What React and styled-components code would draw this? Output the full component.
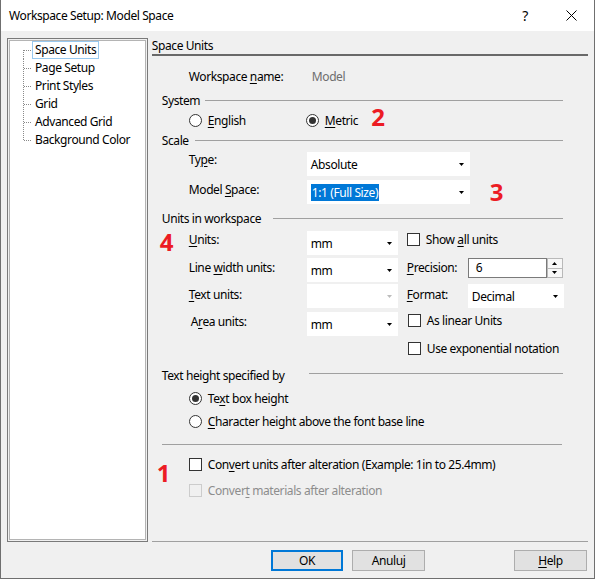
import React from 'react';
import styled, { createGlobalStyle } from 'styled-components';

const GlobalStyle = createGlobalStyle`
  html, body {
    margin: 0;
    padding: 0;
    background: #f0f0f0;
  }
  body {
    font-family: "Segoe UI", "Noto Sans", sans-serif;
    font-size: 12px;
    letter-spacing: -0.4px;
    color: #000;
  }
  u {
    text-decoration-thickness: 1px;
    text-underline-offset: 2px;
  }
`;

const Window = styled.div`
  width: 595px;
  height: 579px;
  box-sizing: border-box;
  border: 1px solid #6f6f6f;
  border-top: none;
  background: #f0f0f0;
  display: flex;
  flex-direction: column;
`;

const TitleBar = styled.div`
  height: 31px;
  background: #fff;
  display: flex;
  align-items: center;
  padding-left: 8px;
  flex-shrink: 0;
`;

const Title = styled.div`
  flex: 1;
  font-size: 12px;
`;

const TitleButton = styled.div`
  width: 46px;
  height: 31px;
  display: flex;
  align-items: center;
  justify-content: center;
  font-size: 14px;
`;

const Body = styled.div`
  display: flex;
  gap: 4px;
  padding: 7px 6px 0 6px;
`;

const Tree = styled.div`
  width: 141px;
  height: 504px;
  box-sizing: border-box;
  border: 1px solid #7a7a7a;
  background: #fff;
  box-shadow: inset 0 0 0 1px #f0f0f0, inset 0 0 0 2px #b4b4b4;
  padding: 2px 0 0 15px;
`;

const TreeItem = styled.div`
  height: 18px;
  display: flex;
  align-items: center;
`;

const TreeLabel = styled.span`
  height: 18px;
  box-sizing: border-box;
  line-height: 16px;
  padding: 0 2px;
  border: 1px solid ${p => (p.$focus ? '#99c9ef' : 'transparent')};
  white-space: nowrap;
`;

const Panel = styled.div`
  width: 437px;
  height: 503px;
  display: flex;
  flex-direction: column;
  border-bottom: 1px solid #a0a0a0;
`;

const PanelHeader = styled.div`
  height: 16px;
  line-height: 16px;
  border-bottom: 2px solid #696969;
`;

const Row = styled.div`
  display: flex;
  align-items: flex-start;
  height: ${p => p.$h || 16}px;
  margin-top: ${p => p.$mt || 0}px;
  padding-left: ${p => (p.$pl === undefined ? 37 : p.$pl)}px;
  flex-shrink: 0;
`;

const Label = styled.span`
  width: ${p => p.$w}px;
  line-height: 16px;
  margin-top: ${p => p.$dy || 0}px;
  padding-left: ${p => p.$indent || 0}px;
  box-sizing: border-box;
  white-space: nowrap;
  flex-shrink: 0;
`;

const Muted = styled.span`
  line-height: 16px;
  color: #6d6d6d;
`;

const GroupHeader = styled.div`
  display: flex;
  align-items: center;
  height: 16px;
  margin-top: ${p => p.$mt}px;
  padding: 0 25px 0 10px;
  flex-shrink: 0;
  white-space: nowrap;
`;

const GroupLine = styled.div`
  flex: 1;
  height: 1px;
  background: #a0a0a0;
  margin-left: ${p => p.$gap}px;
  margin-top: ${p => p.$dy || 0}px;
`;

const Separator = styled.div`
  height: 1px;
  background: #a0a0a0;
  margin: ${p => p.$mt}px 26px 0 10px;
  flex-shrink: 0;
`;

const Combo = styled.div`
  width: ${p => p.$w}px;
  height: 24px;
  box-sizing: border-box;
  background: #fff;
  display: flex;
  align-items: center;
  padding: 0 6px 0 4px;
  flex-shrink: 0;
  white-space: nowrap;
`;

const ComboText = styled.span`
  flex: 1;
  line-height: 15px;
`;

const Selected = styled.span`
  background: #0078d7;
  color: #fff;
  padding: 0 1px;
  line-height: 15px;
`;

const Option = styled.label`
  display: flex;
  align-items: center;
  gap: 6px;
  height: ${p => p.$h || 16}px;
  width: ${p => (p.$w ? `${p.$w}px` : 'auto')};
  margin-left: ${p => p.$ml || 0}px;
  margin-top: ${p => p.$dy || 0}px;
  color: ${p => (p.$disabled ? '#8d8d8d' : '#000')};
  white-space: nowrap;
  flex-shrink: 0;
`;

const RadioCircle = styled.span`
  width: 13px;
  height: 13px;
  box-sizing: border-box;
  border: 1px solid #333;
  border-radius: 50%;
  background: #fff;
  display: flex;
  align-items: center;
  justify-content: center;
  flex-shrink: 0;
  &::after {
    content: '';
    width: 7px;
    height: 7px;
    border-radius: 50%;
    background: #333;
    display: ${p => (p.$checked ? 'block' : 'none')};
  }
`;

const CheckBox = styled.span`
  width: 13px;
  height: 13px;
  box-sizing: border-box;
  border: 1px solid ${p => (p.$disabled ? '#cccccc' : '#333')};
  background: ${p => (p.$disabled ? 'transparent' : '#fff')};
  flex-shrink: 0;
`;

const TextInput = styled.div`
  width: 79px;
  height: 20px;
  box-sizing: border-box;
  border: 1px solid #7a7a7a;
  background: #fff;
  padding-left: 7px;
  line-height: 17px;
`;

const Spinner = styled.div`
  width: 16px;
  height: 20px;
  box-sizing: border-box;
  border: 1px solid #b9b9b9;
  display: flex;
  flex-direction: column;
  background: #f7f7f7;
`;

const SpinHalf = styled.div`
  flex: 1;
  display: flex;
  align-items: center;
  justify-content: center;
  border-top: ${p => (p.$bottom ? '1px solid #b9b9b9' : 'none')};
`;

const Marker = styled.span`
  font-family: "Open Sans", "Noto Sans", sans-serif;
  font-weight: 700;
  font-size: 24px;
  line-height: 24px;
  letter-spacing: 0;
  color: #ec1c24;
  width: ${p => (p.$w ? `${p.$w}px` : 'auto')};
  margin-left: ${p => p.$ml || 0}px;
  margin-top: ${p => p.$dy || 0}px;
  flex-shrink: 0;
`;

const Filler = styled.div`
  flex: 1;
`;

const Footer = styled.div`
  display: flex;
  gap: 9px;
  padding: 8px 7px 0 270px;
`;

const Button = styled.div`
  width: ${p => p.$w || 73}px;
  height: 21px;
  box-sizing: border-box;
  background: #e1e1e1;
  border: ${p => (p.$default ? '2px solid #0078d7' : '1px solid #adadad')};
  display: flex;
  align-items: center;
  justify-content: center;
  margin-left: ${p => (p.$push ? 'auto' : '0')};
`;

const Arrow = ({ color = '#000', up = false }) => (
  <svg width="5" height="3" viewBox="0 0 5 3">
    <path d={up ? 'M0 3H5L2.5 0Z' : 'M0 0H5L2.5 3Z'} fill={color} />
  </svg>
);

const Connector = ({ pos }) => {
  const top = pos === 'first' ? 9 : 0;
  const bottom = pos === 'last' ? 9 : 18;
  return (
    <svg width="9" height="18" viewBox="0 0 9 18">
      <path
        d={`M0.5 ${top}V${bottom}M1 9.5H9`}
        stroke="#8a8a8a"
        strokeWidth="1"
        strokeDasharray="1 1"
        fill="none"
      />
    </svg>
  );
};

const treeItems = ['Space Units', 'Page Setup', 'Print Styles', 'Grid', 'Advanced Grid', 'Background Color'];

export default function App() {
  return (
    <>
      <GlobalStyle />
      <Window>
        <TitleBar>
          <Title>Workspace Setup: Model Space</Title>
          <TitleButton>?</TitleButton>
          <TitleButton>
            <svg width="11" height="11" viewBox="0 0 11 11">
              <path d="M0.5 0.5L10.5 10.5M10.5 0.5L0.5 10.5" stroke="#000" strokeWidth="1" />
            </svg>
          </TitleButton>
        </TitleBar>

        <Body>
          <Tree>
            {treeItems.map((name, i) => (
              <TreeItem key={name}>
                <Connector pos={i === 0 ? 'first' : i === treeItems.length - 1 ? 'last' : 'mid'} />
                <TreeLabel $focus={i === 0}>{name}</TreeLabel>
              </TreeItem>
            ))}
          </Tree>

          <Panel>
            <PanelHeader>Space Units</PanelHeader>

            <Row $mt={13}>
              <Label $w={123}>Workspace <u>n</u>ame:</Label>
              <Muted>Model</Muted>
            </Row>

            <GroupHeader $mt={7}>
              System
              <GroupLine $gap={5} />
            </GroupHeader>
            <Row $mt={4}>
              <Option $w={117}>
                <RadioCircle />
                <span><u>E</u>nglish</span>
              </Option>
              <Option>
                <RadioCircle $checked />
                <span><u>M</u>etric</span>
              </Option>
              <Marker $ml={13} $dy={-7}>2</Marker>
            </Row>

            <GroupHeader $mt={4}>
              Scale
              <GroupLine $gap={6} />
            </GroupHeader>
            <Row $mt={4} $h={24}>
              <Label $w={118}>Ty<u>p</u>e:</Label>
              <Combo $w={163}>
                <ComboText>Absolute</ComboText>
                <Arrow />
              </Combo>
            </Row>
            <Row $mt={4} $h={24}>
              <Label $w={118} $dy={2}>Model <u>S</u>pace:</Label>
              <Combo $w={163}>
                <ComboText><Selected>1:1 (Full Size)</Selected></ComboText>
                <Arrow />
              </Combo>
              <Marker $ml={20}>3</Marker>
            </Row>

            <GroupHeader $mt={6}>
              Units in workspace
              <GroupLine $gap={12} />
            </GroupHeader>
            <Row $mt={5} $h={24} $pl={8}>
              <Marker $w={29} $dy={-1}>4</Marker>
              <Label $w={118} $dy={1}><u>U</u>nits:</Label>
              <Combo $w={91}>
                <ComboText>mm</ComboText>
                <Arrow />
              </Combo>
              <Option $h={13} $ml={9} $dy={2}>
                <CheckBox />
                <span>Show <u>a</u>ll units</span>
              </Option>
            </Row>
            <Row $mt={3} $h={24}>
              <Label $w={118} $dy={2}>Line <u>w</u>idth units:</Label>
              <Combo $w={91}>
                <ComboText>mm</ComboText>
                <Arrow />
              </Combo>
              <Label $w={70} $dy={2} $indent={9}><u>P</u>recision:</Label>
              <TextInput>6</TextInput>
              <Spinner>
                <SpinHalf><Arrow up /></SpinHalf>
                <SpinHalf $bottom><Arrow /></SpinHalf>
              </Spinner>
            </Row>
            <Row $mt={2} $h={24}>
              <Label $w={118} $dy={3}><u>T</u>ext units:</Label>
              <Combo $w={91}>
                <ComboText />
                <Arrow color="#bcbcbc" />
              </Combo>
              <Label $w={70} $dy={3} $indent={9}><u>F</u>ormat:</Label>
              <Combo $w={96}>
                <ComboText>Decimal</ComboText>
                <Arrow />
              </Combo>
            </Row>
            <Row $mt={4} $h={24}>
              <Label $w={118} $dy={2} $indent={2}>A<u>r</u>ea units:</Label>
              <Combo $w={91}>
                <ComboText>mm</ComboText>
                <Arrow />
              </Combo>
              <Option $h={13} $ml={10} $dy={2}>
                <CheckBox />
                <span>As linear Units</span>
              </Option>
            </Row>
            <Row $mt={6} $h={13} $pl={256}>
              <Option $h={13}>
                <CheckBox />
                <span>Use exponential notation</span>
              </Option>
            </Row>

            <GroupHeader $mt={12}>
              Text height specified by
              <GroupLine $gap={25} $dy={-3} />
            </GroupHeader>
            <Row $mt={7}>
              <Option>
                <RadioCircle $checked />
                <span>Te<u>x</u>t box height</span>
              </Option>
            </Row>
            <Row $mt={7}>
              <Option>
                <RadioCircle />
                <span><u>C</u>haracter height above the font base line</span>
              </Option>
            </Row>

            <Separator $mt={15} />

            <Row $mt={13} $h={13} $pl={5}>
              <Marker $w={32} $dy={3}>1</Marker>
              <Option $h={13}>
                <CheckBox />
                <span>Con<u>v</u>ert units after alteration (Example: 1in to 25.4mm)</span>
              </Option>
            </Row>
            <Row $mt={13} $h={13}>
              <Option $h={13} $disabled>
                <CheckBox $disabled />
                <span>Conver<u>t</u> materials after alteration</span>
              </Option>
            </Row>
            <Filler />
          </Panel>
        </Body>

        <Footer>
          <Button $default $w={72}>OK</Button>
          <Button>Anuluj</Button>
          <Button $push><span><u>H</u>elp</span></Button>
        </Footer>
      </Window>
    </>
  );
}
